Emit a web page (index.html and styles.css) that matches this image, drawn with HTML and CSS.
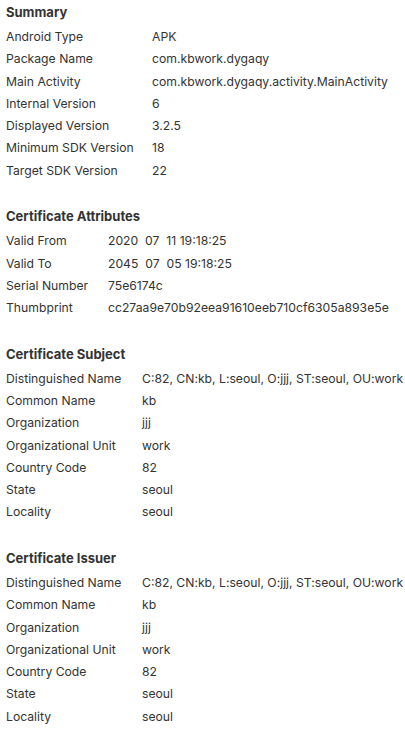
FILE: index.html
```html
<!DOCTYPE html>
<html>
<head>
<meta charset="utf-8">
<link rel="stylesheet" href="styles.css">
</head>
<body>
<section class="sec">
  <h2 class="title">Summary</h2>
  <table class="kv kv-summary">
    <tr><td class="k">Android Type</td><td>APK</td></tr>
    <tr><td class="k">Package Name</td><td>com.kbwork.dygaqy</td></tr>
    <tr><td class="k">Main Activity</td><td>com.kbwork.dygaqy.activity.MainActivity</td></tr>
    <tr><td class="k">Internal Version</td><td>6</td></tr>
    <tr><td class="k">Displayed Version</td><td>3.2.5</td></tr>
    <tr><td class="k">Minimum SDK Version</td><td>18</td></tr>
    <tr><td class="k">Target SDK Version</td><td>22</td></tr>
  </table>
</section>
<section class="sec">
  <h2 class="title">Certificate Attributes</h2>
  <table class="kv kv-attr">
    <tr><td class="k">Valid From</td><td>2020&nbsp; 07&nbsp; 11 19:18:25</td></tr>
    <tr><td class="k">Valid To</td><td>2045&nbsp; 07&nbsp; 05 19:18:25</td></tr>
    <tr><td class="k">Serial Number</td><td>75e6174c</td></tr>
    <tr><td class="k">Thumbprint</td><td>cc27aa9e70b92eea91610eeb710cf6305a893e5e</td></tr>
  </table>
</section>
<section class="sec">
  <h2 class="title">Certificate Subject</h2>
  <table class="kv kv-name">
    <tr><td class="k">Distinguished Name</td><td>C:82, CN:kb, L:seoul, O:jjj, ST:seoul, OU:work</td></tr>
    <tr><td class="k">Common Name</td><td>kb</td></tr>
    <tr><td class="k">Organization</td><td>jjj</td></tr>
    <tr><td class="k">Organizational Unit</td><td>work</td></tr>
    <tr><td class="k">Country Code</td><td>82</td></tr>
    <tr><td class="k">State</td><td>seoul</td></tr>
    <tr><td class="k">Locality</td><td>seoul</td></tr>
  </table>
</section>
<section class="sec">
  <h2 class="title">Certificate Issuer</h2>
  <table class="kv kv-name">
    <tr><td class="k">Distinguished Name</td><td>C:82, CN:kb, L:seoul, O:jjj, ST:seoul, OU:work</td></tr>
    <tr><td class="k">Common Name</td><td>kb</td></tr>
    <tr><td class="k">Organization</td><td>jjj</td></tr>
    <tr><td class="k">Organizational Unit</td><td>work</td></tr>
    <tr><td class="k">Country Code</td><td>82</td></tr>
    <tr><td class="k">State</td><td>seoul</td></tr>
    <tr><td class="k">Locality</td><td>seoul</td></tr>
  </table>
</section>
</body>
</html>
```
FILE: styles.css
```css
html, body {
  margin: 0;
  padding: 0;
  background: #fff;
}
body {
  font-family: "Inter", sans-serif;
  font-size: 12.2px;
  color: #333;
  padding: 0 0 0 6px;
}
.sec {
  margin-bottom: 22.5px;
}
.title {
  margin: 0 0 2px;
  font-family: "Inter", sans-serif;
  font-size: 13px;
  font-weight: 700;
  line-height: 24px;
  color: #333;
}
.kv {
  border-collapse: collapse;
  font-family: "Inter", sans-serif;
  font-size: 12.2px;
}
.kv td {
  padding: 0;
  line-height: 22.25px;
  white-space: nowrap;
  vertical-align: middle;
}
.kv td.k {
  box-sizing: border-box;
  padding-right: 8px;
}
.kv-summary td.k {
  width: 146px;
}
.kv-attr td.k {
  width: 102px;
}
.kv-name td.k {
  width: 136px;
}
```
